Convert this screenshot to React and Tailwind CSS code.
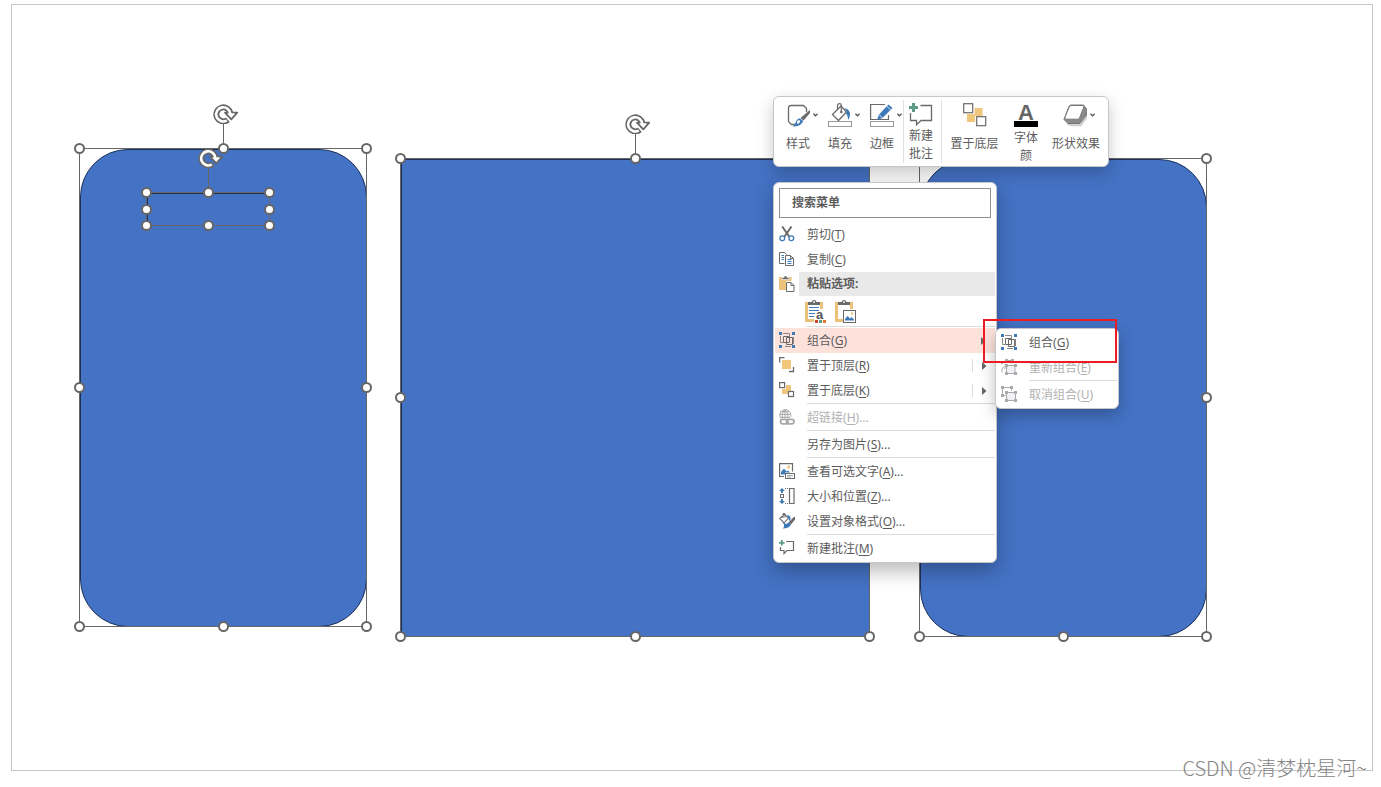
/**
 * 幻灯片画布：选中的形状、浮动工具栏、右键菜单和"组合"子菜单
 */

// 选中对象的控制点
const Handle = ({ hidden }) => (
  <span className={`size-[11px] rounded-full border-2 border-[#666] bg-white ${hidden ? 'invisible' : ''}`} />
);

// 旋转控制柄：圆形箭头 + 连接线
const RotateHandle = () => (
  <div className="absolute bottom-full left-1/2 -ml-2.5 flex flex-col">
    <svg width="26" height="20" viewBox="0 0 26 20" fill="none">
      <path d="M17.3 9.500A7 7 0 1 0 14.8 15.800" stroke="#666" strokeWidth="6" />
      <path d="M12 8.600H24.200L18.300 15.300Z" fill="#fff" stroke="#666" strokeWidth="1.800" strokeLinejoin="round" />
      <path d="M17.300 10.500A7.100 7.100 0 1 0 13.800 16.500" stroke="#fff" strokeWidth="2.600" />
      <path d="M14.800 9.600H21.500L18.200 13.300Z" fill="#fff" />
    </svg>
    <span className="ml-2.5 h-[25px] w-px bg-[#666]" />
  </div>
);

// 一个处于选中状态的形状
const SelectedShape = ({ place, shape, rotate }) => (
  <div className={`absolute pt-px pl-px ${place}`}>
    <div className={`h-full w-full bg-[#4472c4] ${shape}`} />
    <div className="absolute inset-0 border border-[#666]">
      {rotate && <RotateHandle />}
      <div className="absolute -inset-1.5 flex flex-col justify-between">
        <div className="flex justify-between"><Handle /><Handle /><Handle /></div>
        <div className="flex justify-between"><Handle /><Handle hidden /><Handle /></div>
        <div className="flex justify-between"><Handle /><Handle /><Handle /></div>
      </div>
    </div>
  </div>
);

const Icon = ({ size = 16, className = 'size-4', children }) => (
  <svg viewBox={`0 0 ${size} ${size}`} className={`shrink-0 ${className}`} fill="none" stroke="#6a6a6a" aria-hidden="true">
    {children}
  </svg>
);

const Chevron = () => (
  <svg width="5" height="4" viewBox="0 0 5 4" fill="none" stroke="#555" strokeWidth="1.3">
    <path d="M.4 .8L2.5 2.8L4.6 .8" />
  </svg>
);

// ---- 工具栏图标 (24x24) ----
const StyleIcon = () => (
  <Icon size={24} className="size-6">
    <path d="M11 21.500H5.500L2.500 18.500V5Q2.500 2.500 5 2.500H17.500L20.500 5.500V9" strokeWidth="1.300" />
    <path d="M23.800 7L24 10L17.500 17.500L14.500 15Z" fill="#6a6a6a" stroke="none" />
    <path d="M13.700 15.200L17.200 18Q15.500 23.500 6.500 23.600Q9.500 21.500 10 18.500Q11.200 15.600 13.700 15.200Z" fill="#3f7ab8" stroke="none" />
    <path d="M11 18.500Q12 16.800 14.200 17.500Q14.200 20.300 11.300 21Z" fill="#fff" stroke="none" />
  </Icon>
);

const FillIcon = () => (
  <Icon size={24} className="size-6">
    <path d="M4.500 11.500L13 3L18.500 9L10.500 17.500Z" strokeWidth="1.300" />
    <path d="M9.500 6.500V2.500Q9.500 .700 11.500 .700Q13.300 .700 13.300 2.500V9" strokeWidth="1.200" />
    <circle cx="13.300" cy="9" r="1.300" fill="#6a6a6a" stroke="none" />
    <path d="M16.500 5Q22.300 6.500 22 12Q21.800 15 20 17Q20 12 17.800 10.500L19 9Z" fill="#3f7ab8" stroke="none" />
    <rect x=".5" y="18.500" width="23" height="5" stroke="#999" />
  </Icon>
);

const OutlineIcon = () => (
  <Icon size={24} className="size-6">
    <path d="M15 1.500H.600V16.500H18.500V12" strokeWidth="1.200" />
    <path d="M7 17L9 11.500L18.500 1.500L22.500 5L12.500 15Z" fill="#3f7ab8" stroke="none" />
    <path d="M16.800 3.200L20.700 6.900M9 11.500L12.500 15" stroke="#fff" strokeWidth=".800" />
    <rect x=".5" y="18.500" width="23" height="5" stroke="#999" />
  </Icon>
);

const CommentIcon = () => (
  <Icon size={24} className="size-6">
    <path d="M11.500 2.500H22.500V17.500H12L7.500 21.800V17.500H1.500V10" strokeWidth="1.300" />
    <path d="M4.500 0V9M0 4.500H9" stroke="#5d9b88" strokeWidth="3" />
  </Icon>
);

const SendBackIcon = () => (
  <Icon size={24} className="size-6">
    <path d="M11.500 5H19.500V13H12V19H4V11H11.500Z" fill="#f0c67c" stroke="none" />
    <rect x=".7" y=".7" width="9" height="9" fill="#fff" strokeWidth="1.200" />
    <rect x="13.700" y="13.700" width="9" height="9" fill="#fff" strokeWidth="1.200" />
  </Icon>
);

const FontColorIcon = () => (
  <span className="flex w-6 flex-col items-center pt-0.5 font-['Liberation_Sans',sans-serif] text-[#666]">
    <span className="h-4 text-[22px] leading-4 font-bold">A</span>
    <span className="h-1.5 w-full bg-black" />
  </span>
);

const EffectsIcon = () => (
  <Icon size={24} className="size-6">
    <path d="M4 20.500L8.500 22.300H17.500L24 14V6" stroke="#ccc" strokeWidth="2" />
    <path d="M8 2H20.500L23.500 6V12L17 20.500H5L1 16.500L5.500 4.500Q6.300 2 8 2Z" fill="#8a8a8a" stroke="#777" />
    <path d="M8.300 2.500H20Q21.200 2.800 20.800 4L16.500 15Q16 16.200 14.500 16.200H3Q1.300 16 2 14L6 4.500Q6.700 2.700 8.300 2.500Z" fill="#fff" stroke="#777" />
  </Icon>
);

// ---- 菜单图标 (16x16) ----
const CutIcon = () => (
  <Icon>
    <path d="M3.200 .5L10.500 11M12.500 .5L5.200 11" strokeWidth="2" />
    <circle cx="3.300" cy="12.300" r="2.400" stroke="#3f7ab8" strokeWidth="1.300" />
    <circle cx="12.300" cy="12.300" r="2.400" stroke="#3f7ab8" strokeWidth="1.300" />
  </Icon>
);

const CopyIcon = () => (
  <Icon>
    <path d="M5.500 12.500H.500V1.500H5.500L7.500 3.500" />
    <path d="M6.500 4.500H11.500L14.500 7.500V14.500H6.500ZM11.500 4.500V7.500H14.500" />
    <path d="M2.500 4.500H5M2.500 6.500H5M2.500 8.500H5M8.500 8.500H12.500M8.500 10.500H12.500M8.500 12.500H12.500" stroke="#3f7ab8" />
  </Icon>
);

const PasteIcon = () => (
  <Icon>
    <path d="M0 1H12.500V5H7V14H0Z" fill="#eac27c" stroke="none" />
    <path d="M3 3.500V1.500H5V0H8V1.500H10V3.500Z" fill="#6a6a6a" stroke="#fff" strokeWidth=".6" />
    <path d="M7.500 6.500H12L15 9.500V15.500H7.500ZM12 6.500V9.500H15" fill="#fff" />
  </Icon>
);

const GroupIcon = () => (
  <Icon>
    <path d="M4.500 4.500H10.500V10.500H4.500ZM7.500 7.500V12.500H13.500V5.500H7.500V8" />
    <path d="M4 1.500H10.500V4M1.500 4V10.500H4M14.500 12V5M12 14.500H6" stroke="#888" />
    <path d="M0 0H3V3H0ZM13 0H16V3H13ZM0 13H3V16H0ZM13 13H16V16H13Z" fill="#3f7ab8" stroke="none" />
  </Icon>
);

const BringFrontIcon = () => (
  <Icon>
    <rect x="3" y="3" width="9" height="9" fill="#f0c67c" stroke="none" />
    <path d="M5.500 .6H.6V5.500M14.500 10V14.500H10" strokeWidth="1.300" />
  </Icon>
);

const SendBackSmallIcon = () => (
  <Icon>
    <path d="M7 3H12V9H9V12H3V7H7Z" fill="#f0c67c" stroke="none" />
    <rect x=".6" y=".6" width="5" height="5" fill="#fff" strokeWidth="1.200" />
    <rect x="9.500" y="9.500" width="5" height="5" fill="#fff" strokeWidth="1.200" />
  </Icon>
);

const LinkIcon = () => (
  <Icon>
    <g stroke="#a8a8a8">
      <path d="M2 9.500A5.500 5.500 0 1 1 11.500 8M.500 5.500H11.500M1.500 2.800H10.500M1.500 8.300H11M6 .500V9M6 .500Q2.500 3.500 3.500 9M6 .500Q9.500 3.500 8.700 9" />
      <rect x="1.500" y="10.300" width="7.500" height="4.500" rx="2.200" strokeWidth="1.800" />
      <rect x="7.500" y="10.300" width="7.500" height="4.500" rx="2.200" strokeWidth="1.800" />
    </g>
  </Icon>
);

const AltTextIcon = () => (
  <Icon>
    <path d="M5 13.500H.600V.600H13.500V8.500" strokeWidth="1.200" />
    <path d="M2 11.500V9L5 5.500L7.500 8.500L9 7.500L11 9.500H6V11.500Z" fill="#3f7ab8" stroke="none" />
    <circle cx="9.700" cy="4" r="1.500" fill="#eac27c" stroke="none" />
    <rect x="6.500" y="10.500" width="9" height="5" fill="#fff" />
    <path d="M8 12.500H14M8 14H12" strokeWidth=".6" />
  </Icon>
);

const SizeIcon = () => (
  <Icon>
    <path d="M10.500 .500H15V15.500H10.500Z" strokeWidth="1.200" />
    <path d="M6 .500H10M6 15.500H10" strokeDasharray="1 1" />
    <rect x="1.500" y="6.500" width="3" height="3" />
    <path d="M3 0L6 3H4V5H2V3H0ZM3 16L6 13H4V11H2V13H0Z" fill="#3f7ab8" stroke="none" />
  </Icon>
);

const FormatIcon = () => (
  <Icon>
    <path d="M.700 5.500L5.500 1L9.500 5L5 10ZM4 5V1.500Q4 .500 5 .500Q6 .500 6 1.500V4.500" strokeWidth="1.100" />
    <path d="M8.500 2Q12 2.500 11.500 6.500L10 8Q10 5 8.500 4Z" fill="#3f7ab8" stroke="none" />
    <path d="M16 4V6.500L12 11.500L9.500 9.500L15 3.800Z" fill="#6a6a6a" stroke="none" />
    <path d="M4 9.500L7 11L9.500 9.500L12 11.500Q10.500 15.500 3.500 15.500Q6.500 13.500 4 9.500Z" fill="#3f7ab8" stroke="none" />
  </Icon>
);

const CommentSmallIcon = () => (
  <Icon>
    <path d="M7 1.500H14.500V10.500H8L5 13.500V10.500H1.500V7" strokeWidth="1.200" />
    <path d="M2.800 0V5.600M0 2.800H5.600" stroke="#5d9b88" strokeWidth="1.800" />
  </Icon>
);

const RegroupIcon = () => (
  <Icon>
    <g stroke="#aaa">
      <path d="M6 1.500H11.500V4.500M1 13.500V10Q1.500 7.500 5.500 7.500M3.500 5L6 7.500L3.500 10" />
      <rect x="5.500" y="6.500" width="8.500" height="8" fill="#f3f0f5" />
      <path d="M4 0H7V3H4ZM10 0H13V3H10ZM4 5H7V8H4ZM13 5H16V8H13ZM4 13H7V16H4ZM13 13H16V16H13ZM0 3H2V5H0Z" fill="#aaa" stroke="none" />
    </g>
  </Icon>
);

const UngroupIcon = () => (
  <Icon>
    <g stroke="#aaa">
      <path d="M4.500 9.500H1.500V1.500H10.500V4.500" />
      <rect x="5.500" y="6.500" width="9" height="8" fill="#f3f0f5" />
      <path d="M0 0H3V3H0ZM9 0H12V3H9ZM0 8H3V11H0ZM4 5H7V8H4ZM13 5H16V8H13ZM4 13H7V16H4ZM13 13H16V16H13Z" fill="#aaa" stroke="none" />
    </g>
  </Icon>
);

// 粘贴选项共用的剪贴板外形
const Clipboard = ({ label, children }) => (
  <button type="button" aria-label={label} className="h-[23px] w-[21px]">
    <svg width="21" height="23" viewBox="0 0 21 23" fill="none">
      <path d="M6 3.500H1.500V20.500H9M13 3.500H16.500V9" stroke="#eac27c" strokeWidth="3" />
      <path d="M3 5V2H6.500Q7 0 9 0Q11 0 11.500 2H15V5Z" fill="#6a6a6a" />
      <circle cx="9" cy="2" r=".9" fill="#fff" />
      {children}
    </svg>
  </button>
);

const tools = [
  { lines: ['样式'], icon: StyleIcon, chevron: true, box: 'w-[42px]', iconBox: 'justify-end pr-px', labelBox: 'pt-2' },
  { lines: ['填充'], icon: FillIcon, chevron: true, box: 'w-[42px]', iconBox: 'justify-end pr-px', labelBox: 'pt-2' },
  { lines: ['边框'], icon: OutlineIcon, chevron: true, box: 'w-[42px]', iconBox: 'justify-end pr-px', labelBox: 'pt-2' },
  { lines: ['新建', '批注'], icon: CommentIcon, box: 'w-[39px] border-x border-[#e1e1e1] pr-[3px]', iconBox: 'justify-center', labelBox: '' },
  { lines: ['置于底层'], icon: SendBackIcon, box: 'w-[65px]', iconBox: 'justify-center', labelBox: 'pt-2' },
  { lines: ['字体', '颜'], icon: FontColorIcon, box: 'w-[38px]', iconBox: 'justify-center', labelBox: 'pt-0.5' },
  { lines: ['形状效果'], icon: EffectsIcon, chevron: true, box: 'w-[62px]', iconBox: 'justify-end pr-3', labelBox: 'pt-2' },
];

const Toolbar = () => (
  <div className="absolute top-24 left-[773px] flex h-[71px] rounded-md border border-[#c6c6c6] bg-white py-[3px] pr-px pl-[3px] shadow-[0_6px_16px_rgba(0,0,0,0.22)]">
    {tools.map(({ lines, icon: ToolIcon, chevron, box, iconBox, labelBox }) => (
      <button key={lines[0]} type="button" className={`flex flex-col items-stretch justify-start pt-[3px] ${box}`}>
        <span className={`flex h-6 items-center gap-[3px] ${iconBox}`}>
          <ToolIcon />
          {chevron && <Chevron />}
        </span>
        <span className={`flex flex-col items-center leading-[18px] whitespace-nowrap ${labelBox}`}>
          {lines.map(line => <span key={line}>{line}</span>)}
        </span>
      </button>
    ))}
  </div>
);

// 菜单项；k 为带下划线的快捷字母
const MenuItem = ({ icon: ItemIcon, label, k, more, active, disabled, arrow, split }) => (
  <li>
    <button
      type="button"
      disabled={disabled}
      className={`flex h-[25px] w-full items-center pl-1 ${active ? 'bg-[#fde2dc]' : ''} ${disabled ? 'text-[#b1b1b1]' : ''}`}
    >
      <span className="w-7 pb-px">{ItemIcon && <ItemIcon />}</span>
      <span className="flex-1 text-left">
        {label}(<u className="underline-offset-2">{k}</u>){more && '...'}
      </span>
      {arrow && (
        <span className={`flex h-[13px] w-[23px] items-center pl-[9px] ${split ? 'border-l border-[#dcdcdc]' : ''}`}>
          <svg width="5" height="8" viewBox="0 0 5 8" fill="#666"><path d="M0 0L4.500 4L0 8Z" /></svg>
        </span>
      )}
    </button>
  </li>
);

const Divider = () => <li role="separator" className="mb-px ml-8 h-px bg-[#dcdcdc]" />;

const ContextMenu = () => (
  <div className="absolute top-[182px] left-[773px] w-56 rounded-md border border-[#c6c6c6] bg-white p-px shadow-[0_8px_20px_rgba(0,0,0,0.28)]">
    <div className="p-1">
      <input
        type="text"
        aria-label="搜索菜单"
        placeholder="搜索菜单"
        className="block h-[30px] w-full border border-[#8f8f8f] px-3 pb-0.5 font-bold outline-none placeholder:text-[#5c5c5c]"
      />
    </div>
    <ul>
      <MenuItem icon={CutIcon} label="剪切" k="T" />
      <MenuItem icon={CopyIcon} label="复制" k="C" />
      <li>
        <div className="flex h-6 items-center pl-1">
          <span className="w-5 pb-px"><PasteIcon /></span>
          <span className="flex h-full flex-1 items-center bg-[#e9e9e9] pl-2 font-bold">粘贴选项:</span>
        </div>
        <div className="flex h-[30px] items-center gap-[9px] pl-[30px]">
          <Clipboard label="使用目标主题">
            <path d="M4 7.500H14M4 10.500H14M4 13.500H10M4 16.500H9" stroke="#3f7ab8" strokeWidth="1.200" />
            <text x="11" y="19" fontSize="13" fontWeight="bold" fill="#555" fontFamily="Liberation Sans, sans-serif">a</text>
            <path d="M10 20H13V23H10Z" fill="#c9452b" />
            <path d="M14 20H17V23H14Z" fill="#5d9b88" />
            <path d="M18 20H21V23H18Z" fill="#e8762c" />
          </Clipboard>
          <Clipboard label="图片">
            <rect x="8.500" y="10.500" width="12" height="12" fill="#fff" stroke="#6a6a6a" />
            <path d="M10 20.500V19L12.500 16L15 18.500L16.500 17L19 19.500V20.500Z" fill="#3f7ab8" />
            <circle cx="17" cy="13.500" r="1.200" fill="#eac27c" />
          </Clipboard>
        </div>
      </li>
      <Divider />
      <MenuItem icon={GroupIcon} label="组合" k="G" active arrow />
      <MenuItem icon={BringFrontIcon} label="置于顶层" k="R" arrow split />
      <MenuItem icon={SendBackSmallIcon} label="置于底层" k="K" arrow split />
      <Divider />
      <MenuItem icon={LinkIcon} label="超链接" k="H" more disabled />
      <Divider />
      <MenuItem label="另存为图片" k="S" more />
      <Divider />
      <MenuItem icon={AltTextIcon} label="查看可选文字" k="A" more />
      <MenuItem icon={SizeIcon} label="大小和位置" k="Z" more />
      <MenuItem icon={FormatIcon} label="设置对象格式" k="O" more />
      <Divider />
      <MenuItem icon={CommentSmallIcon} label="新建批注" k="M" />
    </ul>
  </div>
);

const GroupSubmenu = () => (
  <ul className="absolute top-[328px] left-[995px] w-[124px] rounded-md border border-[#c6c6c6] bg-white p-px shadow-[0_6px_16px_rgba(0,0,0,0.25)]">
    <MenuItem icon={GroupIcon} label="组合" k="G" />
    <MenuItem icon={RegroupIcon} label="重新组合" k="E" disabled />
    <Divider />
    <MenuItem icon={UngroupIcon} label="取消组合" k="U" disabled />
  </ul>
);

const App = () => (
  <main className="relative flex min-h-screen overflow-hidden bg-white pt-1 pr-2 pb-4 pl-[11px] font-['Noto_Sans','Noto_Sans_CJK_SC',sans-serif] text-xs text-[#5c5c5c]">
    {/* 幻灯片边界 */}
    <div className="flex-1 border border-[#c6c6c6]" />

    {/* 画布上的形状 */}
    <SelectedShape place="top-[148px] left-[79px] h-[479px] w-72" shape="rounded-[48px] border border-[#1d3157]" rotate />
    <SelectedShape place="top-[158px] left-[400px] h-[479px] w-[470px]" shape="border-t border-l border-[#1d3157]" rotate />
    <SelectedShape place="top-[158px] left-[919px] h-[479px] w-72" shape="rounded-[48px] border border-[#1d3157]" />
    <SelectedShape place="top-48 left-[146px] h-[34px] w-[124px]" shape="border-t border-l border-[#1d3157]" rotate />

    <Toolbar />
    <ContextMenu />
    <GroupSubmenu />

    {/* 标注红框 */}
    <div className="pointer-events-none absolute top-[319px] left-[983px] h-11 w-[134px] border-2 border-[#ed1c24]" />

    {/* 水印 */}
    <p className="absolute right-3.5 bottom-[5px] font-['Noto_Sans_CJK_SC',sans-serif] text-xl font-light text-[#858585]">
      CSDN @清梦枕星河~
    </p>
  </main>
);

export default App;
